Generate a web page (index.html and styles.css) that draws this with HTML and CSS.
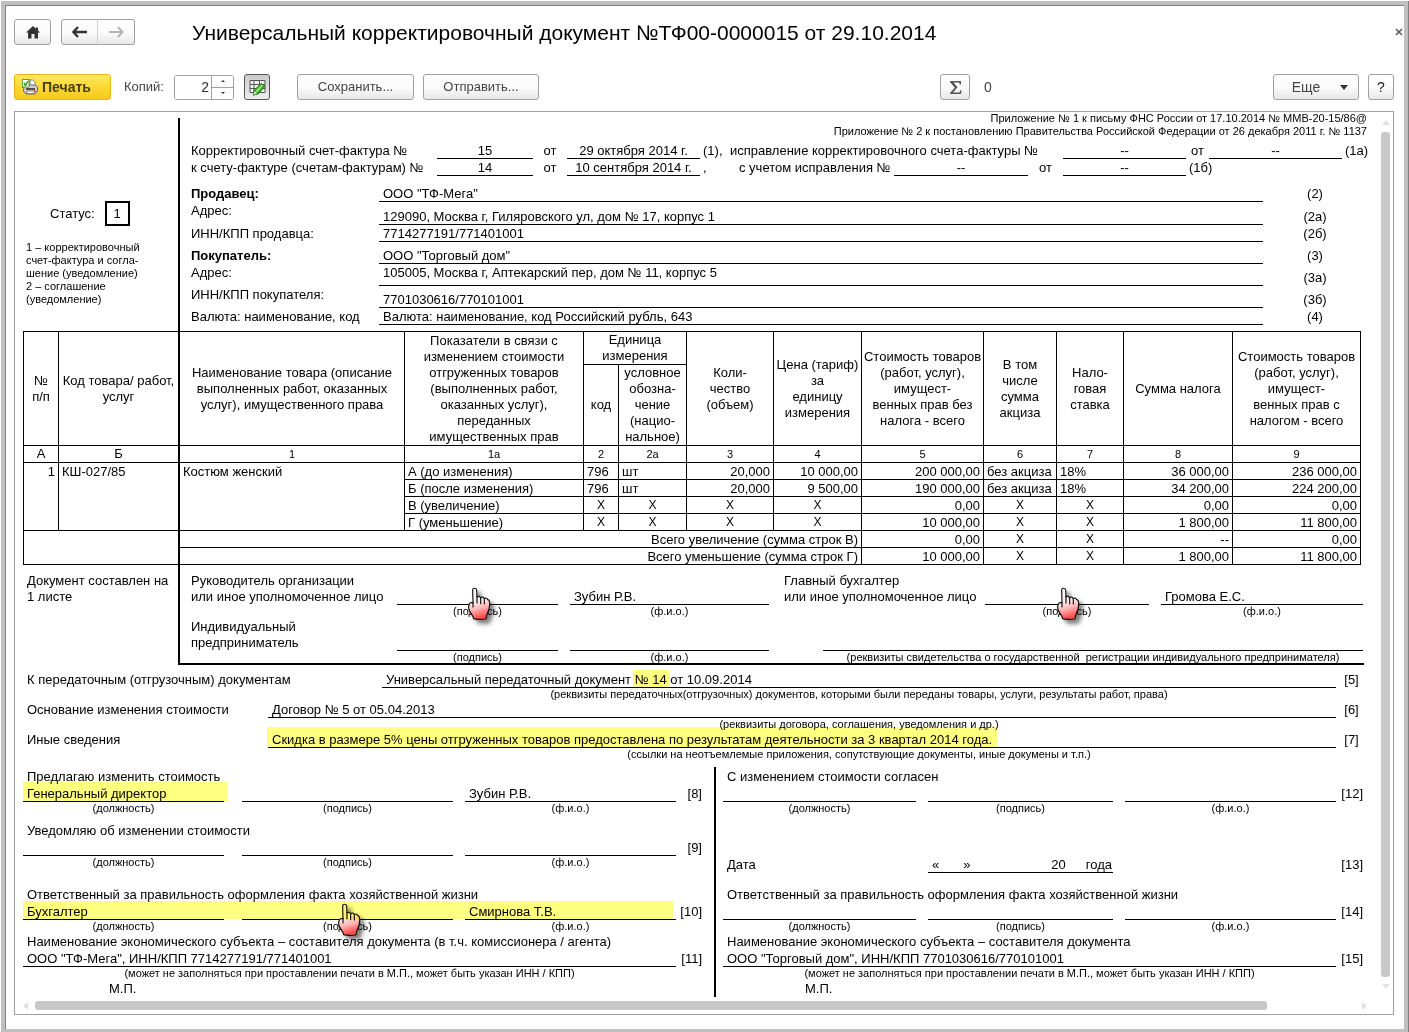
FILE: index.html
```html
<!DOCTYPE html>
<html lang="ru">
<head>
<meta charset="utf-8">
<title>Универсальный корректировочный документ</title>
<link rel="stylesheet" href="styles.css">
</head>
<body>
<svg class="defs" width="0" height="0" aria-hidden="true">
  <defs>
    <linearGradient id="skin" x1="0" y1="0" x2="0.2" y2="1">
      <stop offset="0" stop-color="#ffffff"/>
      <stop offset="0.5" stop-color="#ffeaea"/>
      <stop offset="0.72" stop-color="#ffb4b4"/>
      <stop offset="1" stop-color="#ff4c4c"/>
    </linearGradient>
    <symbol id="hand" viewBox="0 0 72 108">
      <path d="M17 9C17 2 28 2 29 9L30 30C34 26 39 28 41 33C45 28 50 30 52 35C57 31 61 34 62 38C67 38 68 44 68 52C68 66 66 72 60 82L57 95C50 98 28 98 20 95C19 88 14 82 9 74C4 66 4 58 7 51C10 46 15 46 18 48Z" fill="url(#skin)" stroke="#111" stroke-width="3.500" stroke-linejoin="round"/>
      <path d="M18 46V60M30 28V48M41 33V50M52 36V51" fill="none" stroke="#111" stroke-width="3.500" stroke-linecap="round"/>
    </symbol>
  </defs>
</svg>
<div class="window">
  <header class="titlebar">
    <button class="btn home" aria-label="Начальная страница"><svg width="14" height="13" viewBox="0 0 14 13"><path d="M7 0L0 6.5H2V12.500H5.500V8H8.500V12.500H12V6.500H14L12 4.600V1.500H10V2.800Z" fill="#333"/></svg></button>
    <div class="nav">
      <button class="btn" aria-label="Назад"><svg width="16" height="12" viewBox="0 0 16 12"><path d="M6 1L1.500 6L6 11M2 6H15" fill="none" stroke="#333" stroke-width="2.400"/></svg></button>
      <button class="btn" aria-label="Вперед"><svg width="16" height="12" viewBox="0 0 16 12"><path d="M10 1L14.500 6L10 11M14 6H1" fill="none" stroke="#b4b4b4" stroke-width="2"/></svg></button>
    </div>
    <h1>Универсальный корректировочный документ №ТФ00-0000015 от 29.10.2014</h1>
    <button class="close" aria-label="Закрыть"><svg width="8" height="8" viewBox="0 0 8 8"><path d="M1 1L7 7M7 1L1 7" stroke="#555" stroke-width="1.500"/></svg></button>
  </header>

  <div class="toolbar">
    <button class="btn print"><svg width="16" height="16" viewBox="0 0 16 16"><rect x="0.500" y="0.500" width="7" height="8" fill="#fff" stroke="#6f9a4a"/><path d="M2 4L3.500 6.500L6.500 2" fill="none" stroke="#2f9a1c" stroke-width="1.500"/><path d="M8 1H11L13 3V7H8Z" fill="#fff" stroke="#7890b0"/><path d="M2 8L5 6H13L15.500 8V12L13 15H4L1.500 12Z" fill="#d5d2ca" stroke="#67645c"/><rect x="0.500" y="0.500" width="6.500" height="7.500" fill="#fff" stroke="#6f9a4a"/><path d="M2 4L3.500 6.500L6 2" fill="none" stroke="#2f9a1c" stroke-width="1.500"/><path d="M4 10H13" stroke="#55524b" stroke-width="2"/><path d="M5 12H12V14.500H5Z" fill="#fff" stroke="#8a877e"/><rect x="12" y="11.500" width="2" height="1.500" fill="#e2452a"/></svg>Печать</button>
    <label for="copies">Копий:</label>
    <div class="spin"><input id="copies" type="text" value="2"><div class="steps"><button aria-label="Больше"><i class="tri up"></i></button><button aria-label="Меньше"><i class="tri down"></i></button></div></div>
    <button class="btn edit" aria-label="Редактирование"><svg width="17" height="17" viewBox="0 0 17 17"><path d="M1 1.500H16V13.500H1ZM1 5.500H16M1 9.500H16M5 1.500V13.500M10.500 1.500V13.500" fill="#f2f2f2" stroke="#555"/><path d="M4.500 16L5 11.500L12 4.500L16 7.500L9 15Z" fill="#3fae2a" stroke="#1f7a12"/><path d="M7 13L13.500 6" stroke="#a8e894" stroke-width="1.500"/><path d="M4.500 16L5 11.500L8.800 15Z" fill="#f4ffe8" stroke="#1f7a12" stroke-width="0.700"/></svg></button>
    <button class="btn save">Сохранить...</button>
    <button class="btn send">Отправить...</button>
    <span class="space"></span>
    <button class="btn sum" aria-label="Сумма"><svg width="13" height="15" viewBox="0 0 13 15"><path d="M1 1H12V4.500H11L10 2.500H4.500L8.500 7.300L4 12.500H10.500L11.500 10.300H12.500L12 14H1V13L5.800 7.800L1 2Z" fill="#555"/></svg></button>
    <output class="total">0</output>
    <span class="space wide"></span>
    <button class="btn more">Еще<i class="tri down"></i></button>
    <button class="btn help">?</button>
  </div>

  <main class="sheet">
    <div class="paper">
      <section class="head">
        <div class="side">
          <div class="status">Статус: <b>1</b></div>
          <p class="small">1 – корректировочный<br>счет-фактура и согла-<br>шение (уведомление)<br>2 – соглашение<br>(уведомление)</p>
        </div>
        <div class="main">
          <p class="small law">Приложение № 1 к письму ФНС России от 17.10.2014 № ММВ-20-15/86@<br>Приложение № 2 к постановлению Правительства Российской Федерации от 26 декабря 2011 г. № 1137</p>
          <div class="inv one"><span>Корректировочный счет-фактура №</span><u>15</u><em>от</em><u>29 октября 2014 г.</u><span class="ref">(1),</span><span>исправление корректировочного счета-фактуры №</span><u>--</u><em>от</em><u>--</u><span class="ref">(1а)</span></div>
          <div class="inv two"><span>к счету-фактуре (счетам-фактурам) №</span><u>14</u><em>от</em><u>10 сентября 2014 г.</u><span class="ref">,</span><span>с учетом исправления №</span><u>--</u><em>от</em><u>--</u><span class="ref">(1б)</span></div>
          <dl class="party seller">
            <div class="line"><dt><b>Продавец:</b></dt><dd>ООО "ТФ-Мега"</dd><dd class="n">(2)</dd></div>
            <div class="line tall low"><dt>Адрес:</dt><dd>129090, Москва г, Гиляровского ул, дом № 17, корпус 1</dd><dd class="n">(2а)</dd></div>
            <div class="line"><dt>ИНН/КПП продавца:</dt><dd>7714277191/771401001</dd><dd class="n">(2б)</dd></div>
          </dl>
          <dl class="party buyer">
            <div class="line"><dt><b>Покупатель:</b></dt><dd>ООО "Торговый дом"</dd><dd class="n">(3)</dd></div>
            <div class="line tall"><dt>Адрес:</dt><dd>105005, Москва г, Аптекарский пер, дом № 11, корпус 5</dd><dd class="n">(3а)</dd></div>
            <div class="line tall low"><dt>ИНН/КПП покупателя:</dt><dd>7701030616/770101001</dd><dd class="n">(3б)</dd></div>
            <div class="line"><dt>Валюта: наименование, код</dt><dd>Валюта: наименование, код Российский рубль, 643</dd><dd class="n">(4)</dd></div>
          </dl>
        </div>
      </section>

      <table>
        <colgroup><col class="c35"><col class="c121"><col class="c225"><col class="c179"><col class="c35"><col class="c68"><col class="c87"><col class="c88"><col class="c122"><col class="c73"><col class="c67"><col class="c109"><col class="c128"></colgroup>
        <thead>
          <tr><th rowspan="2">№<br>п/п</th><th rowspan="2" class="thick">Код товара/ работ,<br>услуг</th><th rowspan="2">Наименование товара (описание<br>выполненных работ, оказанных<br>услуг), имущественного права</th><th rowspan="2">Показатели в связи с<br>изменением стоимости<br>отгруженных товаров<br>(выполненных работ,<br>оказанных услуг),<br>переданных<br>имущественных прав</th><th colspan="2">Единица<br>измерения</th><th rowspan="2">Коли-<br>чество<br>(объем)</th><th rowspan="2">Цена (тариф)<br>за<br>единицу<br>измерения</th><th rowspan="2">Стоимость товаров<br>(работ, услуг),<br>имущест-<br>венных прав без<br>налога - всего</th><th rowspan="2">В том<br>числе<br>сумма<br>акциза</th><th rowspan="2">Нало-<br>говая<br>ставка</th><th rowspan="2">Сумма налога</th><th rowspan="2">Стоимость товаров<br>(работ, услуг),<br>имущест-<br>венных прав с<br>налогом - всего</th></tr>
          <tr><th>код</th><th>условное<br>обозна-<br>чение<br>(нацио-<br>нальное)</th></tr>
          <tr class="idx"><th class="big">А</th><th class="big thick">Б</th><th>1</th><th>1а</th><th>2</th><th>2а</th><th>3</th><th>4</th><th>5</th><th>6</th><th>7</th><th>8</th><th>9</th></tr>
        </thead>
        <tbody>
          <tr><td rowspan="4" class="r">1</td><td rowspan="4" class="thick">КШ-027/85</td><td rowspan="4">Костюм женский</td><td>А (до изменения)</td><td>796</td><td>шт</td><td class="r">20,000</td><td class="r">10 000,00</td><td class="r">200 000,00</td><td>без акциза</td><td>18%</td><td class="r">36 000,00</td><td class="r">236 000,00</td></tr>
          <tr><td>Б (после изменения)</td><td>796</td><td>шт</td><td class="r">20,000</td><td class="r">9 500,00</td><td class="r">190 000,00</td><td>без акциза</td><td>18%</td><td class="r">34 200,00</td><td class="r">224 200,00</td></tr>
          <tr><td>В (увеличение)</td><td class="x">X</td><td class="x">X</td><td class="x">X</td><td class="x">X</td><td class="r">0,00</td><td class="x">X</td><td class="x">X</td><td class="r">0,00</td><td class="r">0,00</td></tr>
          <tr><td>Г (уменьшение)</td><td class="x">X</td><td class="x">X</td><td class="x">X</td><td class="x">X</td><td class="r">10 000,00</td><td class="x">X</td><td class="x">X</td><td class="r">1 800,00</td><td class="r">11 800,00</td></tr>
          <tr><td rowspan="2" colspan="2" class="thick"></td><td colspan="6" class="r">Всего увеличение (сумма строк В)</td><td class="r">0,00</td><td class="x">X</td><td class="x">X</td><td class="r">--</td><td class="r">0,00</td></tr>
          <tr><td colspan="6" class="r">Всего уменьшение (сумма строк Г)</td><td class="r">10 000,00</td><td class="x">X</td><td class="x">X</td><td class="r">1 800,00</td><td class="r">11 800,00</td></tr>
        </tbody>
      </table>

      <section class="signs">
        <div class="side">Документ составлен на<br>1 листе</div>
        <div class="main">
          <div class="signrow">
            <span>Руководитель организации<br>или иное уполномоченное лицо</span>
            <div class="field"><p></p><small>(подпись)</small><svg class="hand" width="24" height="36"><use href="#hand"/></svg></div>
            <div class="field"><p>Зубин Р.В.</p><small>(ф.и.о.)</small></div>
            <span>Главный бухгалтер<br>или иное уполномоченное лицо</span>
            <div class="field"><p></p><small>(подпись)</small><svg class="hand" width="24" height="36"><use href="#hand"/></svg></div>
            <div class="field"><p>Громова Е.С.</p><small>(ф.и.о.)</small></div>
          </div>
          <div class="signrow">
            <span>Индивидуальный<br>предприниматель</span>
            <div class="field"><p></p><small>(подпись)</small></div>
            <div class="field"><p></p><small>(ф.и.о.)</small></div>
            <div class="field cert"><p></p><small>(реквизиты свидетельства о государственной&nbsp; регистрации индивидуального предпринимателя)</small></div>
          </div>
        </div>
      </section>

      <section class="details">
        <div class="detail"><span class="wide">К передаточным (отгрузочным) документам</span><p class="short">Универсальный передаточный документ <mark>№ 14</mark> от 10.09.2014</p><em>[5]</em><small>(реквизиты передаточных(отгрузочных) документов, которыми были переданы товары, услуги, результаты работ, права)</small></div>
        <div class="detail"><span>Основание изменения стоимости</span><p>Договор № 5 от 05.04.2013</p><em>[6]</em><small>(реквизиты договора, соглашения, уведомления и др.)</small></div>
        <div class="detail"><span>Иные сведения</span><p><mark class="tallmark">Скидка в размере 5% цены отгруженных товаров предоставлена по результатам деятельности за 3 квартал 2014 года.</mark></p><em>[7]</em><small>(ссылки на неотъемлемые приложения, сопутствующие документы, иные докумены и т.п.)</small></div>
      </section>

      <section class="halves">
        <div class="half left">
          <div class="block"><h2>Предлагаю изменить стоимость</h2>
            <div class="trio"><div class="field"><p>Генеральный директор</p><small>(должность)</small><i class="marker one"></i></div><div class="field"><p></p><small>(подпись)</small></div><div class="field"><p>Зубин Р.В.</p><small>(ф.и.о.)</small></div><em>[8]</em></div></div>
          <div class="block notify"><h2>Уведомляю об изменении стоимости</h2>
            <div class="trio"><div class="field"><p></p><small>(должность)</small></div><div class="field"><p></p><small>(подпись)</small></div><div class="field"><p></p><small>(ф.и.о.)</small></div><em>[9]</em></div></div>
          <div class="block"><h2>Ответственный за правильность оформления факта хозяйственной жизни</h2>
            <div class="trio"><div class="field"><p>Бухгалтер</p><small>(должность)</small></div><div class="field"><p></p><small>(подпись)</small><svg class="hand" width="24" height="36"><use href="#hand"/></svg></div><div class="field"><p>Смирнова Т.В.</p><small>(ф.и.о.)</small></div><em>[10]</em><i class="marker all"></i></div></div>
          <div class="block subject"><h2>Наименование экономического субъекта – составителя документа (в т.ч. комиссионера / агента)</h2>
            <div class="trio"><div class="field full"><p>ООО "ТФ-Мега", ИНН/КПП 7714277191/771401001</p><small>(может не заполняться при проставлении печати в М.П., может быть указан ИНН / КПП)</small></div><em>[11]</em></div></div>
          <p class="stamp">М.П.</p>
        </div>
        <div class="half right">
          <div class="block"><h2>С изменением стоимости согласен</h2>
            <div class="trio"><div class="field"><p></p><small>(должность)</small></div><div class="field"><p></p><small>(подпись)</small></div><div class="field"><p></p><small>(ф.и.о.)</small></div><em>[12]</em></div></div>
          <div class="trio date"><h2>Дата</h2><p><span>«</span><span>»</span><span>20</span><span>года</span></p><em>[13]</em></div>
          <div class="block"><h2>Ответственный за правильность оформления факта хозяйственной жизни</h2>
            <div class="trio"><div class="field"><p></p><small>(должность)</small></div><div class="field"><p></p><small>(подпись)</small></div><div class="field"><p></p><small>(ф.и.о.)</small></div><em>[14]</em></div></div>
          <div class="block subject"><h2>Наименование экономического субъекта – составителя документа</h2>
            <div class="trio"><div class="field full"><p>ООО "Торговый дом", ИНН/КПП 7701030616/770101001</p><small>(может не заполняться при проставлении печати в М.П., может быть указан ИНН / КПП)</small></div><em>[15]</em></div></div>
          <p class="stamp">М.П.</p>
        </div>
      </section>
    </div>
    <div class="vbar"><i class="tri up"></i><div class="thumb"></div><i class="tri down"></i></div>
    <div class="hbar"><i class="tri prev"></i><div class="thumb"></div><i class="tri next"></i></div>
  </main>
</div>
</body>
</html>
```
FILE: styles.css
```css
* { box-sizing: border-box; }
body {
  margin: 0;
  padding: 1px 0 0 1px;
  background: #fff;
  color: #000;
  font: 13px/16px "Liberation Sans", Arial, sans-serif;
}
p, h1, h2, dl, dd { margin: 0; font-weight: normal; }
em, i { font-style: normal; }
u { text-decoration: none; }
.defs { position: absolute; }

.window {
  min-height: calc(100vh - 1px);
  display: flex;
  flex-direction: column;
  padding: 5px;
  background: #fff;
  border-right: 1px solid #808080;
  border-bottom: 1px solid #808080;
  box-shadow: inset 4px 4px #c0c0c0, inset -4px -4px #c0c0c0, inset 5px 5px #808080;
}

/* buttons */
button { font: inherit; color: #333; padding: 0; margin: 0; }
.btn {
  height: 26px;
  display: flex;
  align-items: center;
  justify-content: center;
  border: 1px solid #a0a0a0;
  border-radius: 3px;
  background: linear-gradient(#fff, #fbfbfb 50%, #e8e8e8);
  color: #444;
}
.tri { width: 0; height: 0; border: 4px solid transparent; }
.tri.down { border-top: 5px solid #333; border-bottom: 0; }
.tri.up { border-bottom: 5px solid #333; border-top: 0; }

.titlebar {
  display: flex;
  align-items: center;
  padding: 13px 0 0 8px;
}
.home { width: 37px; }
.nav { display: flex; margin-left: 10px; }
.nav .btn { width: 37px; }
.nav .btn:first-child { border-radius: 3px 0 0 3px; }
.nav .btn:last-child { border-radius: 0 3px 3px 0; border-left-color: #d0d0d0; margin-left: -1px; width: 38px; }
h1 { flex: 1; margin-left: 57px; padding-top: 2px; font-size: 21px; line-height: 24px; }
.close { border: 0; background: none; width: 8px; display: flex; }

.toolbar {
  display: flex;
  align-items: center;
  padding: 29px 9px 0 8px;
  color: #444;
}
.print, .spin, .total, .more, .help { font-size: 14px; }
.print {
  width: 97px;
  justify-content: flex-start;
  gap: 4px;
  padding-left: 7px;
  border-color: #f0b31c;
  background: linear-gradient(#ffe95e, #fbd837 50%, #f8c91b);
  font-weight: bold;
  color: #4a3f10;
}
.toolbar label { width: 50px; margin-left: 13px; }
.spin {
  width: 60px;
  height: 25px;
  display: flex;
  border: 1px solid #a0a0a0;
  border-radius: 3px;
  overflow: hidden;
}
.spin input {
  flex: 1;
  min-width: 0;
  border: 0;
  padding: 0 2px 0 0;
  font: inherit;
  color: #333;
  text-align: right;
}
.steps { width: 22px; display: flex; flex-direction: column; border-left: 1px solid #a0a0a0; }
.steps button { flex: 1; display: grid; place-items: center; border: 0; background: #fff; }
.steps button + button { border-top: 1px solid #a0a0a0; }
.steps .tri { border-width: 2px; }
.edit { width: 26px; margin-left: 10px; border-color: #555; background: linear-gradient(#ccc, #eee); }
.save { width: 117px; margin-left: 27px; }
.send { width: 116px; margin-left: 9px; }
.space { flex: 401; }
.sum { width: 30px; }
.total { margin-left: 14px; width: 8px; }
.space.wide { flex: 281; }
.more { width: 86px; gap: 20px; padding-left: 8px; }
.help { width: 26px; margin-left: 9px; color: #222; }

/* print sheet */
.sheet {
  flex: 1;
  display: grid;
  grid-template: 1fr 17px / 1fr 14px;
  margin: 11px 9px 13px 8px;
  border: 1px solid #a0a0a0;
}
.paper { padding: 0 12px 0 8px; min-width: 0; }
.small, small { display: block; font-size: 11px; line-height: 13px; }
small { text-align: center; white-space: nowrap; }
.head, .signs { display: grid; grid-template-columns: 157px minmax(0, 1fr); }
.side { border-right: 2px solid #000; }
.head .side { margin-top: 6px; padding-top: 83px; }
.status { display: flex; align-items: center; gap: 10px; padding-left: 27px; margin-bottom: 15px; }
.status b {
  width: 25px;
  height: 25px;
  border: 2px solid #000;
  font-weight: normal;
  line-height: 21px;
  text-align: center;
}
.side .small { padding-left: 3px; }
.head .main { padding: 0 0 6px 11px; }
.law { text-align: right; margin-bottom: 4px; }

.inv { display: grid; text-align: center; white-space: nowrap; line-height: 18px; }
.inv.one { grid-template-columns: 246fr 96fr 34fr 133fr 30fr 333fr 123fr 23fr 133fr 25fr; }
.inv.two { grid-template-columns: 246fr 96fr 34fr 133fr 39fr 155fr 134fr 35fr 123fr 181fr; }
.inv > * { min-width: 0; height: 17px; }
.inv span { text-align: left; }
.inv .ref { padding-left: 3px; }
.inv u { border-bottom: 1px solid #000; }

.party.seller { margin-top: 9px; }
.party.buyer { margin-top: 5px; }
.line {
  display: grid;
  grid-template: 100% / 188fr 884fr 104fr;
  height: 17px;
  line-height: 18px;
}
.line dd { display: flex; border-bottom: 1px solid #000; padding-left: 4px; }
.line .n { border-color: transparent; justify-content: center; align-items: flex-end; padding: 0; line-height: 14px; }
.tall { height: 22px; }
.seller .tall { height: 23px; }
.low dd { align-items: flex-end; line-height: 14px; }

table {
  width: calc(100% - 6px);
  table-layout: fixed;
  border-collapse: separate;
  border-spacing: 0;
  border-left: 1px solid #000;
  border-top: 1px solid #000;
}
.c35 { width: 35px; }
.c121 { width: 121px; }
.c225 { width: 225px; }
.c179 { width: 179px; }
.c68 { width: 68px; }
.c87 { width: 87px; }
.c88 { width: 88px; }
.c122 { width: 122px; }
.c73 { width: 73px; }
.c67 { width: 67px; }
.c109 { width: 109px; }
.c128 { width: 128px; }
th, td {
  border-right: 1px solid #000;
  border-bottom: 1px solid #000;
  font-weight: normal;
  text-align: left;
  vertical-align: top;
  white-space: nowrap;
}
th { padding: 0; text-align: center; vertical-align: middle; }
td { padding: 1px 3px 0; line-height: 15px; }
.idx th { font-size: 11px; }
.idx .big { font-size: 13px; }
.thick { border-right-width: 2px; }
td.r { text-align: right; padding-left: 0; }
td.x { text-align: center; font-size: 12px; }

.signs .side { padding: 8px 0 0 4px; }
.signs .main {
  margin-right: 3px;
  padding: 8px 1px 0 11px;
  border-bottom: 2px solid #000;
}
.signrow { display: grid; grid-template-columns: 206fr 161fr 12fr 199fr 15fr 201fr 164fr 12fr 202fr; height: 46px; white-space: nowrap; }
.signrow + .signrow { height: 44px; }
.signrow > * { min-width: 0; }
.signrow > :nth-child(3) { grid-column: 4; }
.signrow > :nth-child(4) { grid-column: 6; }
.signrow > :nth-child(6) { grid-column: 9; }
.signrow .cert { grid-column: 6 / -1; margin-left: 39px; }
.signrow .field { padding-top: 15px; }

.field { position: relative; min-width: 0; white-space: nowrap; }
.field p { height: 17px; padding: 1px 0 0 4px; line-height: 15px; border-bottom: 1px solid #000; }
.hand {
  position: absolute;
  left: calc(50% - 11px);
  top: 14px;
  filter: drop-shadow(4px 4px 2px rgba(0, 0, 0, 0.5));
}
.trio .hand { top: 0; }

.details { padding-top: 6px; }
.detail {
  display: grid;
  grid-template-columns: 241fr 114fr 954fr 31fr;
  margin-left: 4px;
  white-space: nowrap;
}
.detail > * { min-width: 0; }
.detail span, .detail p, .detail em { padding-top: 1px; line-height: 15px; }
.detail .wide { grid-column: 1 / 3; }
.detail p { grid-column: 2 / 4; height: 17px; padding-left: 4px; border-bottom: 1px solid #000; }
.detail p.short { grid-column: 3; }
.detail em { text-align: center; }
.detail small { grid-column: 3; }
mark { background: #ffff80; color: inherit; mix-blend-mode: multiply; padding: 2px 2px 1px; margin: 0 -2px; }
.tallmark { padding: 5px 5px 1px; margin: 0 -5px; }

.halves { display: grid; grid-template-columns: 693fr 651fr; margin-top: 6px; }
.half { padding-top: 2px; }
.left { border-right: 2px solid #000; padding-right: 12px; }
.right { padding-left: 7px; }
h2 { font-size: 13px; line-height: 16px; padding-left: 4px; white-space: nowrap; }
.trio { position: relative; display: grid; column-gap: 12px; }
.left .trio { grid-template-columns: 207fr 211fr 211fr 14px; }
.left .trio .field:first-child:not(.full) { margin-right: 6px; }
.right .trio { grid-template-columns: 193fr 185fr 211fr 19px; }
.trio .full { grid-column: 1 / 4; }
.trio em { justify-self: end; white-space: nowrap; padding-top: 1px; line-height: 15px; }
.right em { padding-right: 4px; }
.left .block:first-child { margin-bottom: 8px; }
.left .notify { margin-bottom: 18px; }
.subject { padding-top: 1px; }
.right .date { margin: 41px 0 14px; }
.date h2, .date p { height: 17px; padding: 1px 1px 0 4px; line-height: 15px; }
.date p { display: flex; gap: 24px; border-bottom: 1px solid #000; }
.date em { grid-column: 4; }
.date span:nth-child(3) { margin-left: auto; }
.date span:last-child { margin-left: -4px; }
.stamp { padding: 1px 0 0 86px; }
.right .stamp { padding-left: 82px; }
.marker { position: absolute; left: 0; background: #ffff80; mix-blend-mode: multiply; }
.marker.one { right: -4px; top: -3px; height: 19px; }
.marker.all { right: 29px; top: -2px; height: 18px; }

/* scroll bars */
.vbar { display: flex; flex-direction: column; align-items: center; padding: 8px 3px 8px 2px; gap: 7px; }
.vbar .thumb { flex: 1; width: 9px; }
.hbar { display: flex; align-items: center; padding: 0 12px 0 8px; gap: 7px; }
.hbar .thumb { flex: 1; height: 9px; margin-right: 88px; }
.thumb { border-radius: 3px; background: #c8c8c8; }
.sheet > div > .tri.up { border-bottom-color: #e2e2e2; }
.sheet > div > .tri.down { border-top-color: #e2e2e2; }
.tri.prev { border-right: 5px solid #e2e2e2; border-left: 0; }
.tri.next { border-left: 5px solid #e2e2e2; border-right: 0; }
```
